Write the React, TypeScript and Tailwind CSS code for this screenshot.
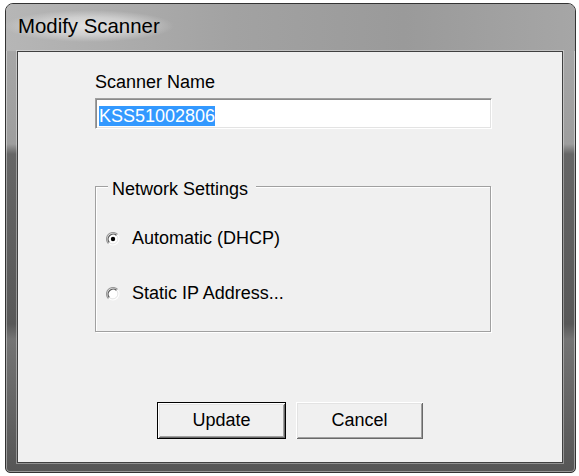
function Radio({ checked }: { checked?: boolean }) {
  return (
    <svg width="14" height="14" viewBox="0 0 14 14" className="shrink-0">
      <circle cx="7" cy="7" r="6.5" fill="#fff" />
      <path d="M2.4 11.6 A6.5 6.5 0 0 1 11.6 2.4" fill="none" stroke="#9a9a9a" strokeWidth="1.2" />
      <path d="M3.4 10.6 A5.1 5.1 0 0 1 10.6 3.4" fill="none" stroke="#5a5a5a" strokeWidth="1.3" />
      <path d="M3.4 10.6 A5.1 5.1 0 0 0 10.6 3.4" fill="none" stroke="#e3e3e3" strokeWidth="1" />
      {checked ? <circle cx="7" cy="7" r="2.2" fill="#000" /> : null}
    </svg>
  );
}

function Button({ label, isDefault, width }: { label: string; isDefault?: boolean; width: string }) {
  return (
    <div className={`${width} h-[37px] ${isDefault ? "border border-black" : ""}`}>
      <div className="flex h-full w-full items-center justify-center bg-[#f0f0f0] text-[18px] leading-[21px] shadow-[inset_1px_1px_0_#fff,inset_-1px_-1px_0_#696969,inset_2px_2px_0_#e3e3e3,inset_-2px_-2px_0_#a0a0a0]">
        {label}
      </div>
    </div>
  );
}

export default function App() {
  return (
    <div className="min-h-screen bg-white pl-[5px] pt-[3px] font-['Liberation_Sans',Arial,sans-serif] text-black">
      <div className="flex h-[470px] w-[571px] flex-col rounded-t-[8px] rounded-b-[5px] border border-[#333] bg-[linear-gradient(180deg,#b4b4b4_0px,#a6a6a6_50px,#9e9e9e_140px,#666_150px,#585858_320px,#747474_335px,#555_470px)] pl-[11px] pr-[12px] pb-[9px] shadow-[inset_0_0_0_1px_rgba(255,255,255,0.4)]">
        <div className="-ml-[11px] -mr-[12px] h-[47px] rounded-t-[7px] bg-[linear-gradient(90deg,#b6b6b6_0%,#a2a2a2_40%,#9a9a9a_70%,#a6a6a6_100%)] pl-[6px] pt-[6px]">
          <span className="-ml-[8px] inline-block bg-[radial-gradient(closest-side,rgba(228,228,228,0.95)_0%,rgba(220,220,220,0.7)_55%,rgba(210,210,210,0)_100%)] px-[14px] py-[4px] text-[20.4px] leading-[24px] text-black">
            Modify Scanner
          </span>
        </div>
        <div className="flex flex-1 flex-col border border-[#404040] bg-[#f0f0f0] shadow-[0_0_0_1px_rgba(255,255,255,0.35)]">
          <div className="ml-[77px] pt-[20px] text-[18px] leading-[21px]">Scanner Name</div>
          <div className="ml-[77px] mt-[5px] h-[31px] w-[397px] border border-t-[#a0a0a0] border-l-[#a0a0a0] border-r-white border-b-white bg-white pl-[3px] pt-[6px] shadow-[inset_1px_1px_0_#8a8a8a,inset_-1px_-1px_0_#e3e3e3]">
            <span className="inline-block h-[20px] bg-[#3399ff] text-[18px] leading-[20px] text-white">KSS51002806</span>
          </div>
          <div className="ml-[77px] mt-[57px] h-[146px] w-[396px] border border-[#a0a0a0] shadow-[inset_1px_1px_0_#fff,1px_1px_0_#fff]">
            <div className="-mt-[8px] ml-[12px] w-fit bg-[#f0f0f0] pl-[4px] pr-[8px] text-[18px] leading-[21px]">Network Settings</div>
            <div className="ml-[10px] mt-[28px] flex items-center gap-[12px] text-[18px] leading-[21px]">
              <Radio checked />
              <span>Automatic (DHCP)</span>
            </div>
            <div className="ml-[10px] mt-[34px] flex items-center gap-[12px] text-[18px] leading-[21px]">
              <Radio />
              <span>Static IP Address...</span>
            </div>
          </div>
          <div className="mt-[70px] flex justify-center gap-[10px]">
            <Button label="Update" isDefault width="w-[129px]" />
            <Button label="Cancel" width="w-[127px]" />
          </div>
        </div>
      </div>
    </div>
  );
}
